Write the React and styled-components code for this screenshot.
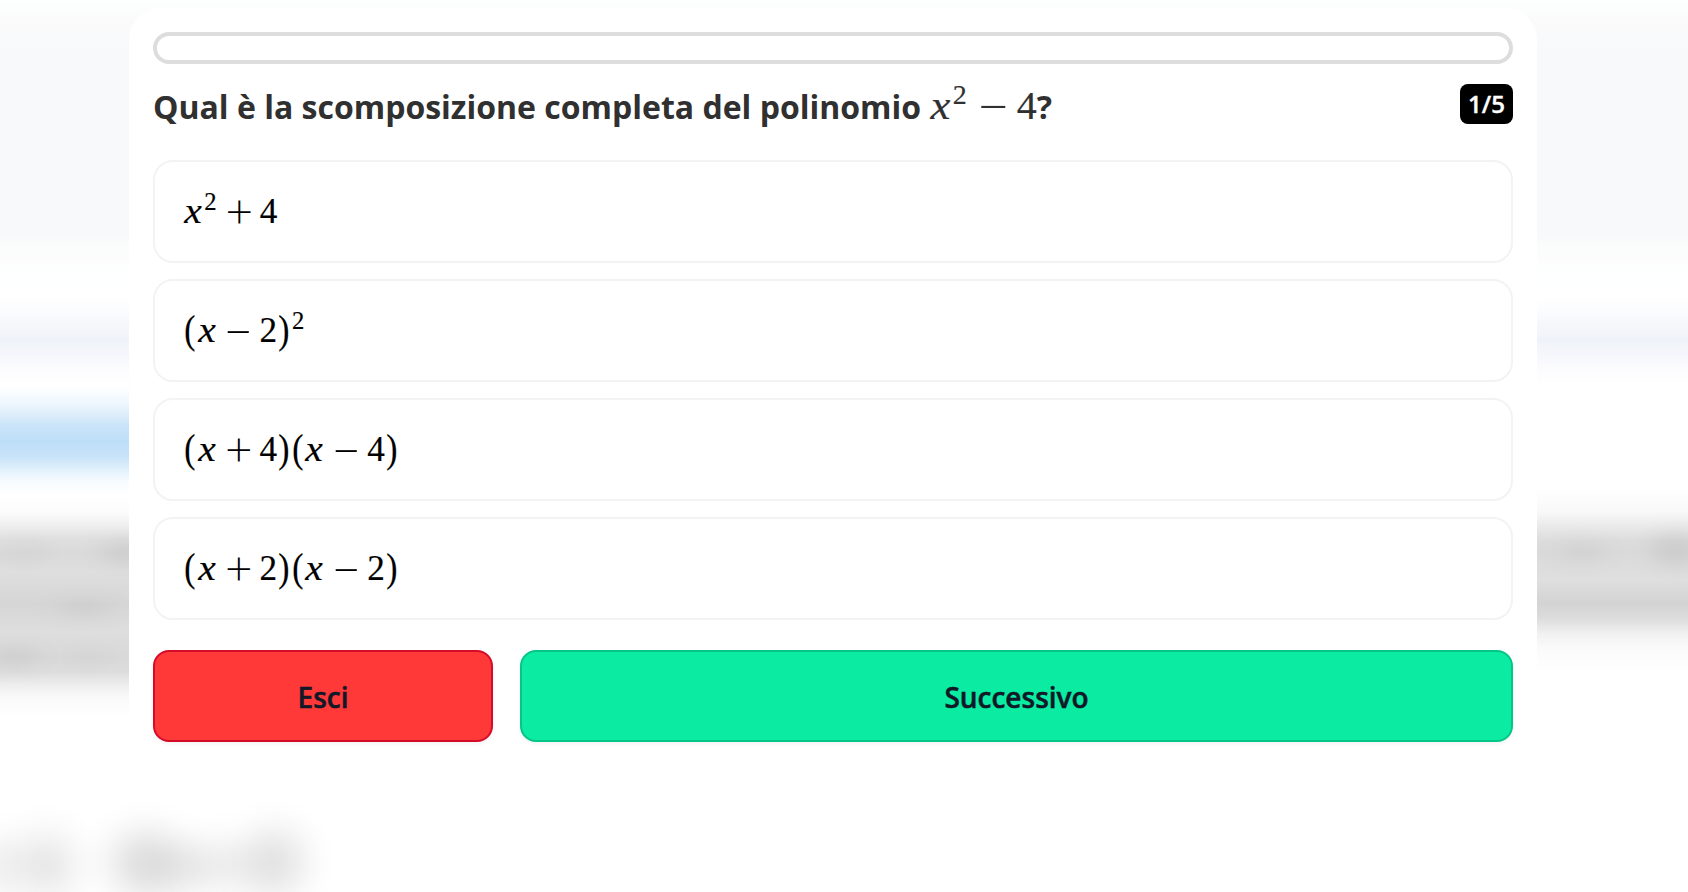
import React from 'react';
import styled, { createGlobalStyle } from 'styled-components';

const GlobalStyle = createGlobalStyle`
  * {
    box-sizing: border-box;
  }

  body {
    margin: 0;
    background: #fff;
    overflow: hidden;
    font-family: 'Open Sans', 'Noto Sans', sans-serif;
  }
`;

// soft spot with a gaussian-like falloff
const spot = (x, y, rx, ry, a) =>
  `radial-gradient(ellipse ${rx}px ${ry}px at ${x}px ${y}px, rgba(0,0,0,${a}), rgba(0,0,0,${a * 0.87}) 20%,
    rgba(0,0,0,${a * 0.57}) 40%, rgba(0,0,0,${a * 0.26}) 60%, rgba(0,0,0,${a * 0.07}) 80%, transparent)`;

const Page = styled.div`
  height: 892px;
  padding: 8px 151px 0 129px;
  background:
    ${spot(0, 866, 50, 60, 0.045)},
    ${spot(46, 865, 62, 64, 0.085)},
    ${spot(145, 863, 70, 66, 0.115)},
    ${spot(185, 867, 70, 58, 0.05)},
    ${spot(225, 865, 70, 58, 0.05)},
    ${spot(275, 862, 62, 66, 0.1)},
    ${spot(25, 552, 50, 28, 0.02)},
    ${spot(125, 552, 50, 30, 0.05)},
    ${spot(84, 608, 55, 26, 0.03)},
    ${spot(15, 657, 50, 28, 0.035)},
    ${spot(88, 657, 40, 28, 0.015)},
    ${spot(1582, 552, 50, 28, 0.03)},
    ${spot(1676, 549, 50, 38, 0.06)},
    linear-gradient(#fff 386px, #f0f8fe 402px, #e2f0fc 412px, #cbe4f9 425px, #bddef8 441px, #c9e3f9 457px,
      #e2f1fc 470px, #f8fcfe 483px, #fff 495px, #fbfbfb 513px, #eeeeee 526px, #dfdfdf 539px, #dadada 553px,
      #dedede 573px, #d6d6d6 604px, #dedede 632px, #d8d8d8 657px, #dddddd 672px, #efefef 686px, #fafafa 698px,
      #fff 716px, #fff) 0 0 / 129px 760px no-repeat,
    linear-gradient(#fff 488px, #f9f9f9 511px, #e9e9e9 527px, #dcdcdc 541px, #dadada 553px, #dfdfdf 580px,
      #d3d3d3 603px, #dcdcdc 618px, #f1f1f1 634px, #fafafa 647px, #fff 672px, #fff) 100% 0 / 151px 760px no-repeat,
    linear-gradient(#fbfffe 0, #fcfdfd 10px, #fbfbfb 18px, #fafafa 32px, #f8fafc 34px, #f8f9fb 46px, #f8f9fb 238px,
      #fafcfc 242px, #fcfcfc 258px, #fdfffe 268px, #fff 296px, #fbfcfd 312px, #f6f7fb 324px, #eff3f9 340px,
      #f6f7fc 355px, #fcfcfe 370px, #fff 388px);
  background-blend-mode: multiply;
`;

const Card = styled.main`
  height: 758px;
  padding: 24px;
  border-radius: 32px;
  background: #fff;
`;

const Progress = styled.div`
  height: 32px;
  border: 4px solid #ddd;
  border-radius: 16px;
`;

const Header = styled.header`
  display: flex;
  justify-content: space-between;
  align-items: flex-start;
  height: 96px;
  padding-top: 18px;
`;

const Question = styled.h1`
  display: flex;
  align-items: baseline;
  margin: 0;
  height: 48px;
  line-height: 44px;
  font-size: 32px;
  font-weight: 700;
  color: #303030;
  white-space: pre;
`;

const Counter = styled.span`
  width: 53px;
  height: 40px;
  margin-top: 2px;
  border-radius: 8px;
  background: #000;
  color: #fff;
  font-size: 24px;
  font-weight: 600;
  line-height: 40px;
  text-align: center;
  -webkit-text-stroke: 0.4px;
`;

const Options = styled.div`
  display: grid;
  gap: 16px;
`;

const Option = styled.button`
  display: flex;
  align-items: center;
  height: 103px;
  padding: 1px 28px 0;
  border: 2px solid #f3f3f3;
  border-radius: 20px;
  background: #fff;
  color: #000;
`;

const Formula = styled.span`
  display: inline-flex;
  align-items: baseline;
  font-family: 'Liberation Serif', serif;
  font-size: ${props => props.$size}px;
  font-weight: 400;
  line-height: 1.2;
  -webkit-text-stroke: 0.2px;
`;

const Glyph = styled.span`
  display: inline-block;
  width: ${props => props.$w}em;
  text-align: center;
`;

const Variable = styled(Glyph)`
  font-style: italic;
  transform: scaleX(1.12);
`;

const Paren = styled(Glyph)`
  transform: scale(0.95, 1.13);
`;

const Operator = styled.span`
  display: inline-flex;
  justify-content: center;
  width: 0.575em;
  margin: 0 0.161em;
  font-family: 'Lato', sans-serif;
  font-size: 1.352em;
  font-weight: 300;
  line-height: 0.5;
  transform: translate(0.015em, 0.11em) scale(${props => props.$scale});
  -webkit-text-stroke: 0;
`;

const Power = styled.sup`
  width: 0.571em;
  padding-left: 0.02em;
  font-size: 0.7em;
  line-height: 0;
  vertical-align: baseline;
  position: relative;
  top: -0.53em;
`;

const Actions = styled.div`
  display: grid;
  grid-template-columns: 340px 1fr;
  gap: 27px;
  margin-top: 30px;
`;

const Button = styled.button`
  height: 92px;
  padding: 1px 0 0;
  border: 2px solid ${props => props.$border};
  border-radius: 16px;
  background: ${props => props.$fill};
  box-shadow: 0 2px 4px rgba(0, 0, 0, 0.05);
  color: #111827;
  font-family: inherit;
  font-size: 28px;
  font-weight: 600;
  -webkit-text-stroke: 0.5px;
`;

const answers = ['x^2+4', '(x-2)^2', '(x+4)(x-4)', '(x+2)(x-2)'];

const MathText = ({ value, size = 35.2 }) => (
  <Formula $size={size}>
    {value.match(/\^?./g).map((token, i) => {
      if (token[0] === '^') return <Power key={i}>{token[1]}</Power>;
      if (token === 'x') return <Variable key={i} $w={0.572}>x</Variable>;
      if (token === '+') return <Operator key={i} $scale={1}>+</Operator>;
      if (token === '-') return <Operator key={i} $scale={1.07}>−</Operator>;
      if (token === '(' || token === ')') return <Paren key={i} $w={0.389}>{token}</Paren>;
      return <Glyph key={i} $w={0.5}>{token}</Glyph>;
    })}
  </Formula>
);

const App = () => (
  <>
    <GlobalStyle />
    <Page>
      <Card>
        <Progress />
        <Header>
          <Question>
            Qual è la scomposizione completa del polinomio <MathText value="x^2-4" size={40} />?
          </Question>
          <Counter>1/5</Counter>
        </Header>
        <Options>
          {answers.map(answer => (
            <Option key={answer}>
              <MathText value={answer} />
            </Option>
          ))}
        </Options>
        <Actions>
          <Button $fill="#ff3838" $border="#d30c2b">Esci</Button>
          <Button $fill="#0beba1" $border="#05c589">Successivo</Button>
        </Actions>
      </Card>
    </Page>
  </>
);

export default App;
